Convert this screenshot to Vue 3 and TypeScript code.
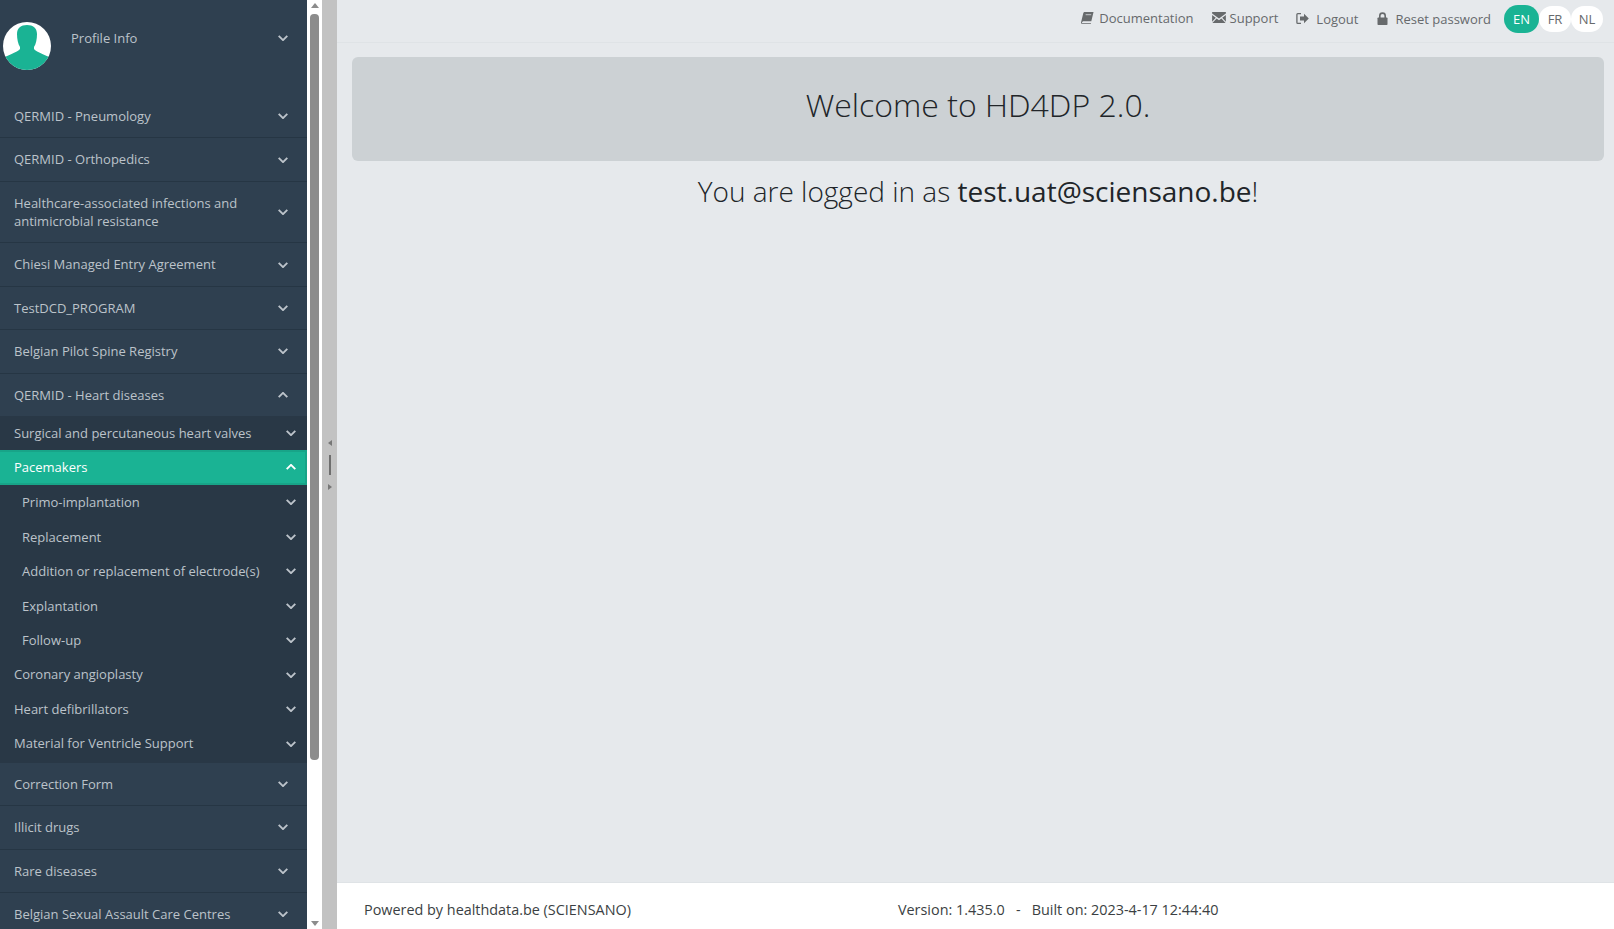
<script setup lang="ts">
interface Row { label: string; open?: boolean; kind: 'top' | 'sub' | 'leaf' | 'active' }
const before: Row[] = [
  { label: 'QERMID - Pneumology', kind: 'top' },
  { label: 'QERMID - Orthopedics', kind: 'top' },
  { label: 'Healthcare-associated infections and antimicrobial resistance', kind: 'top' },
  { label: 'Chiesi Managed Entry Agreement', kind: 'top' },
  { label: 'TestDCD_PROGRAM', kind: 'top' },
  { label: 'Belgian Pilot Spine Registry', kind: 'top' },
  { label: 'QERMID - Heart diseases', kind: 'top', open: true },
]
const nested: Row[] = [
  { label: 'Surgical and percutaneous heart valves', kind: 'sub' },
  { label: 'Pacemakers', kind: 'active', open: true },
  { label: 'Primo-implantation', kind: 'leaf' },
  { label: 'Replacement', kind: 'leaf' },
  { label: 'Addition or replacement of electrode(s)', kind: 'leaf' },
  { label: 'Explantation', kind: 'leaf' },
  { label: 'Follow-up', kind: 'leaf' },
  { label: 'Coronary angioplasty', kind: 'sub' },
  { label: 'Heart defibrillators', kind: 'sub' },
  { label: 'Material for Ventricle Support', kind: 'sub' },
]
const after: Row[] = [
  { label: 'Correction Form', kind: 'top' },
  { label: 'Illicit drugs', kind: 'top' },
  { label: 'Rare diseases', kind: 'top' },
  { label: 'Belgian Sexual Assault Care Centres', kind: 'top' },
]
const down = 'M.7 .8L5 5.100 9.300 .8'
const up = 'M.7 5.200L5 .9 9.300 5.200'
</script>

<template>
  <div class="app">
    <aside class="side">
      <nav class="nav">
        <div class="profile">
          <svg class="avatar" viewBox="0 0 48 48">
            <circle cx="24" cy="24" r="24" fill="#fff" />
            <clipPath id="av"><circle cx="24" cy="24" r="24" /></clipPath>
            <path clip-path="url(#av)" fill="#1ab394" d="M14 12C14 6 18 3 24 3s10 3 10 9c0 5-1 10-3 13v2c1 2 9 5 17 9v12H0V36c8-4 16-7 17-9v-2c-2-3-3-8-3-13z" />
          </svg>
          <span class="profile-label">Profile Info</span>
          <svg class="chev" viewBox="0 0 10 6"><path :d="down" /></svg>
        </div>
        <div v-for="r in before" :key="r.label" class="row top">
          <span class="label">{{ r.label }}</span>
          <svg class="chev" viewBox="0 0 10 6"><path :d="r.open ? up : down" /></svg>
        </div>
        <div class="nested">
          <div v-for="r in nested" :key="r.label" class="row" :class="r.kind">
            <span class="label">{{ r.label }}</span>
            <svg class="chev" viewBox="0 0 10 6"><path :d="r.open ? up : down" /></svg>
          </div>
        </div>
        <div v-for="r in after" :key="r.label" class="row top">
          <span class="label">{{ r.label }}</span>
          <svg class="chev" viewBox="0 0 10 6"><path :d="down" /></svg>
        </div>
      </nav>
      <div class="scrollbar">
        <i class="arrow up"></i>
        <div class="thumb"></div>
        <i class="arrow down"></i>
      </div>
    </aside>

    <div class="splitter">
      <i class="tri left"></i>
      <div class="grip"></div>
      <i class="tri right"></i>
    </div>

    <main class="main">
      <header class="topbar">
        <a class="link doc">
          <svg class="ico" viewBox="0 0 14 14"><path fill="#676a6c" d="M4 1h9.500l-2.400 10H2.200L1 12.200c-.2.400 0 .8.500.8h9.300l-.2.800H1.200C.2 13.800-.2 13 .1 12L2.500 2.200C2.700 1.500 3.300 1 4 1z" /><path stroke="#e6e9ec" stroke-width=".8" d="M5 4h6" /></svg>
          <span>Documentation</span>
        </a>
        <a class="link sup">
          <svg class="ico env" viewBox="0 0 15 12"><path fill="#676a6c" d="M0 0h15v1.600L7.500 7 0 1.600zM0 3.400l4 3L0 10.500zM15 3.400l-4 3 4 4.100zM4.900 7.200l2.600 1.900 2.600-1.900 4.600 4.800H.3z" /></svg>
          <span>Support</span>
        </a>
        <a class="link out">
          <svg class="ico" viewBox="0 0 13 12"><path fill="none" stroke="#676a6c" stroke-width="1.300" d="M5 1.200H1.800c-.5 0-.9.400-.9.900v7.800c0 .5.400.9.900.9H5" /><path fill="#676a6c" d="M4 4h4V1.300L12.800 6 8 10.700V8H4z" /></svg>
          <span>Logout</span>
        </a>
        <a class="link lock">
          <svg class="ico" viewBox="0 0 11 13"><path fill="none" stroke="#676a6c" stroke-width="1.600" d="M2.800 6V3.800a2.700 2.700 0 0 1 5.400 0V6" /><rect x=".5" y="5.500" width="10" height="7.500" rx=".8" fill="#676a6c" /></svg>
          <span>Reset password</span>
        </a>
        <div class="langs">
          <span class="lang on">EN</span>
          <span class="lang">FR</span>
          <span class="lang">NL</span>
        </div>
      </header>
      <section class="content">
        <div class="jumbo"><h1>Welcome to HD4DP 2.0.</h1></div>
        <h2>You are logged in as <b>test.uat@sciensano.be</b>!</h2>
      </section>
      <footer class="foot">
        <span>Powered by healthdata.be (SCIENSANO)</span>
        <span class="ver">Version: 1.435.0 &nbsp;&nbsp;-&nbsp;&nbsp; Built on: 2023-4-17 12:44:40</span>
      </footer>
    </main>
  </div>
</template>

<style scoped>
.app { display: flex; height: 929px; overflow: hidden; font-family: "Open Sans", sans-serif; font-size: 13px; color: #676a6c; }
.side { display: flex; width: 322px; flex: none; height: 100%; }
.nav { width: 307px; flex: none; background: #2f4050; color: #bcc3ca; overflow: hidden; }
.profile { height: 95px; display: flex; align-items: center; padding: 0 19px 19px 3px; box-sizing: border-box; }
.avatar { width: 48px; height: 48px; flex: none; margin-top: 15px; }
.profile-label { margin-left: 20px; flex: 1; }
.row { display: flex; align-items: center; line-height: 18.200px; }
.label { flex: 1; padding-right: 24px; }
.top { padding: 12.100px 19px 12.100px 14px; border-bottom: 1px solid #263644; }
.nested { background: #293846; margin-top: -1px; padding-bottom: 2px; }
.sub, .leaf, .active { padding: 8.150px 11px 8.150px 14px; }
.leaf { padding-left: 22px; }
.active { background: #1ab394; color: #fff; border: solid #18a488; border-width: 2px 2px 2px 0; padding-top: 5.650px; padding-bottom: 6.650px; padding-right: 9px; }
.nested .label { padding-right: 8px; }
.chev { width: 10px; height: 6px; flex: none; fill: none; stroke: currentColor; stroke-width: 1.900; }
.scrollbar { width: 15px; background: #fff; display: flex; flex-direction: column; align-items: center; }
.thumb { width: 9px; height: 746px; background: #8c8c8c; border-radius: 4px; }
.arrow { width: 0; height: 0; border: 4.500px solid transparent; display: block; }
.arrow.up { border-bottom: 5px solid #8c8c8c; border-top: 0; margin: 3px 0 6px; }
.arrow.down { border-top: 5px solid #8c8c8c; border-bottom: 0; margin-top: auto; margin-bottom: 3px; }
.splitter { width: 15px; flex: none; background: #c2c2c2; display: flex; flex-direction: column; align-items: center; justify-content: center; gap: 9px; }
.grip { width: 2px; height: 20px; background: #6e6e6e; }
.tri { width: 0; height: 0; border: 3px solid transparent; }
.tri.left { border-right: 4px solid #777; border-left: 0; }
.tri.right { border-left: 4px solid #777; border-right: 0; }
.main { flex: 1; min-width: 0; display: flex; flex-direction: column; background: #e6e9ec; }
.topbar { height: 43px; flex: none; box-sizing: border-box; border-bottom: 1px solid #dfe3e6; display: flex; align-items: flex-start; justify-content: flex-end; padding-right: 11px; }
.link { display: flex; align-items: center; height: 35px; white-space: nowrap; }
.doc { margin-right: 18px; }
.sup { margin-right: 18px; }
.out, .lock { height: 37px; }
.out { margin-right: 18px; }
.lock { margin-right: 13px; }
.ico { width: 13px; height: 13px; flex: none; margin-right: 5px; }
.lock .ico { margin-right: 6px; }
.env { width: 14px; height: 11px; margin-right: 4px; }
.out .ico { margin-right: 7px; }
.langs { display: flex; align-items: center; height: 38px; }
.lang { width: 32px; height: 26px; background: #fff; border-radius: 13px; display: flex; align-items: center; justify-content: center; }
.lang.on { width: 35px; height: 28px; border-radius: 14px; background: #1ab394; color: #fff; }
.content { flex: 1; padding: 14px 10px 0 15px; text-align: center; }
.jumbo { height: 104px; background: #ccd1d4; border-radius: 6px; display: flex; align-items: center; justify-content: center; padding-bottom: 10px; box-sizing: border-box; }
h1 { margin: 0; font-size: 32px; font-weight: 300; color: #212529; }
h2 { margin: 11px 0 0; font-size: 28px; font-weight: 300; color: #212529; line-height: 38px; }
h2 b { font-weight: 400; color: #212529; }
.foot { height: 47px; flex: none; box-sizing: border-box; background: #fff; border-top: 1px solid #dfe3e6; display: flex; align-items: center; padding: 6px 0 0 27px; font-size: 14.400px; color: #3b3f43; }
.ver { margin-left: 267px; }
</style>
